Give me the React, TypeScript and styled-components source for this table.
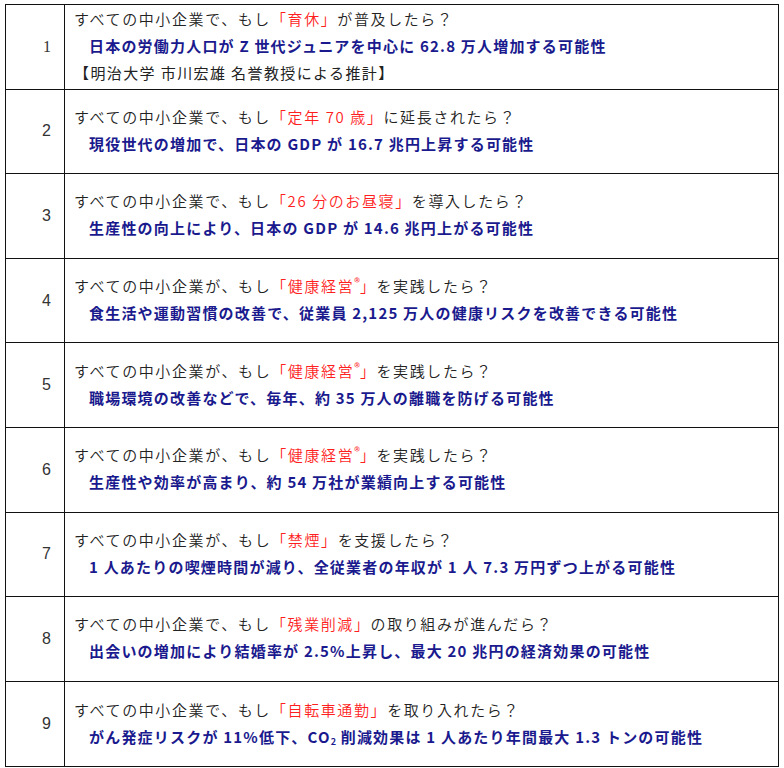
import React from "react";
import styled, { createGlobalStyle } from "styled-components";

const GlobalStyle = createGlobalStyle`
  html, body {
    margin: 0;
    padding: 0;
    background: #ffffff;
  }
  body {
    padding: 4px 5px;
    font-family: "Noto Sans CJK JP", "Noto Sans", sans-serif;
  }
`;

const Table = styled.div`
  width: 774px;
  border: 1px solid #111;
  display: grid;
  grid-template-columns: 59px 1fr;
  grid-auto-rows: 84.6px;
  box-sizing: border-box;
`;

const NumCell = styled.div<{ $last: boolean; $serif: boolean }>`
  border-right: 1px solid #111;
  border-bottom: ${(p) => (p.$last ? "none" : "1px solid #111")};
  display: flex;
  align-items: center;
  justify-content: flex-end;
  padding-right: 13px;
  font-family: ${(p) =>
    p.$serif ? `"Liberation Serif", serif` : `"Liberation Sans", sans-serif`};
  font-size: 16px;
  color: #333;
`;

const TextCell = styled.div<{ $last: boolean }>`
  border-bottom: ${(p) => (p.$last ? "none" : "1px solid #111")};
  display: flex;
  flex-direction: column;
  justify-content: center;
  padding-left: 9px;
  padding-bottom: 2px;
`;

const Question = styled.div`
  font-size: 15px;
  line-height: 27px;
  letter-spacing: 1.6px;
  color: #222;
  font-weight: 350;
  white-space: nowrap;
`;

const Red = styled.span`
  color: #ff1f1f;
`;

const Answer = styled.div`
  font-size: 15px;
  line-height: 28px;
  font-weight: 700;
  color: #1a1a8e;
  padding-left: 15px;
  white-space: nowrap;
  letter-spacing: 1.2px;
`;

const Note = styled.div`
  font-size: 15px;
  line-height: 26px;
  color: #222;
  white-space: nowrap;
  letter-spacing: 1.4px;
`;

const Sub = styled.sub`
  font-size: 9px;
  vertical-align: -2px;
  line-height: 0;
  letter-spacing: 0;
`;

const Mark = styled.sup`
  font-size: 12px;
  vertical-align: 5px;
  line-height: 0;
  letter-spacing: 0;
`;

type Row = {
  pre: string;
  key: React.ReactNode;
  post: string;
  answer: React.ReactNode;
  note?: string;
};

const health = (
  <>
    「健康経営<Mark>®</Mark>」
  </>
);

const rows: Row[] = [
  {
    pre: "すべての中小企業で、もし",
    key: "「育休」",
    post: "が普及したら？",
    answer: "日本の労働力人口が Z 世代ジュニアを中心に 62.8 万人増加する可能性",
    note: "【明治大学 市川宏雄 名誉教授による推計】",
  },
  {
    pre: "すべての中小企業で、もし",
    key: "「定年 70 歳」",
    post: "に延長されたら？",
    answer: "現役世代の増加で、日本の GDP が 16.7 兆円上昇する可能性",
  },
  {
    pre: "すべての中小企業で、もし",
    key: "「26 分のお昼寝」",
    post: "を導入したら？",
    answer: "生産性の向上により、日本の GDP が 14.6 兆円上がる可能性",
  },
  {
    pre: "すべての中小企業が、もし",
    key: health,
    post: "を実践したら？",
    answer: "食生活や運動習慣の改善で、従業員 2,125 万人の健康リスクを改善できる可能性",
  },
  {
    pre: "すべての中小企業が、もし",
    key: health,
    post: "を実践したら？",
    answer: "職場環境の改善などで、毎年、約 35 万人の離職を防げる可能性",
  },
  {
    pre: "すべての中小企業が、もし",
    key: health,
    post: "を実践したら？",
    answer: "生産性や効率が高まり、約 54 万社が業績向上する可能性",
  },
  {
    pre: "すべての中小企業が、もし",
    key: "「禁煙」",
    post: "を支援したら？",
    answer: "1 人あたりの喫煙時間が減り、全従業者の年収が 1 人 7.3 万円ずつ上がる可能性",
  },
  {
    pre: "すべての中小企業で、もし",
    key: "「残業削減」",
    post: "の取り組みが進んだら？",
    answer: "出会いの増加により結婚率が 2.5%上昇し、最大 20 兆円の経済効果の可能性",
  },
  {
    pre: "すべての中小企業で、もし",
    key: "「自転車通勤」",
    post: "を取り入れたら？",
    answer: (
      <>
        がん発症リスクが 11%低下、CO<Sub>2</Sub> 削減効果は 1 人あたり年間最大 1.3 トンの可能性
      </>
    ),
  },
];

export default function App() {
  return (
    <>
      <GlobalStyle />
      <Table>
        {rows.map((r, i) => {
          const last = i === rows.length - 1;
          return (
            <React.Fragment key={i}>
              <NumCell $last={last} $serif={i === 0}>
                {i + 1}
              </NumCell>
              <TextCell $last={last}>
                <Question>
                  {r.pre}
                  <Red>{r.key}</Red>
                  {r.post}
                </Question>
                <Answer>{r.answer}</Answer>
                {r.note && <Note>{r.note}</Note>}
              </TextCell>
            </React.Fragment>
          );
        })}
      </Table>
    </>
  );
}
